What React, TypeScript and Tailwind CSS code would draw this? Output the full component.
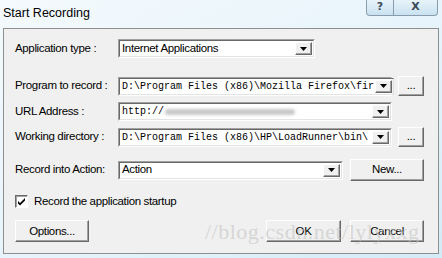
import React from 'react';

const sans = "font-['Liberation_Sans',sans-serif] text-[11.5px] tracking-[-0.35px] whitespace-nowrap";
const mono = "font-['Liberation_Mono','DejaVu_Sans_Mono',monospace]";

function DropArrow() {
  return (
    <div className="w-[17px] h-full flex items-center justify-center bg-[#f0f0f0] border border-t-white border-l-white border-b-[#696969] border-r-[#696969] shadow-[inset_-1px_-1px_0_#a0a0a0]">
      <svg width="7" height="4" viewBox="0 0 7 4">
        <path d="M0 0h7L3.5 4z" fill="#000" />
      </svg>
    </div>
  );
}

function Combo({ children, width, isMono }: { children: React.ReactNode; width: string; isMono?: boolean }) {
  return (
    <div className={`${width} h-[19px] flex items-stretch bg-white border border-t-[#a0a0a0] border-l-[#a0a0a0] border-b-white border-r-white`}>
      <div className="flex-1 flex items-stretch border border-t-[#696969] border-l-[#696969] border-b-[#e3e3e3] border-r-[#e3e3e3]">
        <div className={`flex-1 flex items-center pl-[2px] overflow-hidden whitespace-nowrap text-black ${isMono ? `${mono} text-[10px]` : sans}`}>
          {children}
        </div>
        <div className="p-[1px]">
          <DropArrow />
        </div>
      </div>
    </div>
  );
}

function Btn({ label, width, height = 'h-[22px]' }: { label: string; width: string; height?: string }) {
  return (
    <div className={`${width} ${height} flex items-center justify-center bg-[#f0f0f0] border border-t-white border-l-white border-b-[#696969] border-r-[#696969] shadow-[inset_-1px_-1px_0_#a0a0a0] ${sans} text-black`}>
      {label}
    </div>
  );
}

function Label({ text }: { text: string }) {
  return <div className={`w-[103px] shrink-0 ${sans} text-black`}>{text}</div>;
}

export default function App() {
  return (
    <div className="w-[442px] h-[258px] bg-gradient-to-br from-[#f4fafd] via-[#e8f4fb] to-[#d4ecf7] flex flex-col overflow-hidden relative">
      {/* Title bar */}
      <div className="h-[28px] shrink-0 flex items-start justify-between">
        <div className="pl-[3px] pt-[4px] font-['Liberation_Sans',sans-serif] text-[12.5px] text-black whitespace-nowrap">Start Recording</div>
        <div className="mr-[4px] flex h-[16px] border border-t-0 border-[#8a9cab] rounded-b-[4px] bg-gradient-to-b from-[#e8f3fa] to-[#c9e2f1] overflow-hidden">
          <div className="w-[27px] flex items-center justify-center border-r border-[#8a9cab] text-[11px] font-bold text-[#3b4a58] font-['DejaVu_Sans',sans-serif]">?</div>
          <div className="w-[43px] flex items-center justify-center text-[11px] font-bold text-[#3b4a58] font-['DejaVu_Sans',sans-serif]">X</div>
        </div>
      </div>

      {/* Client area */}
      <div className="mx-[3px] h-[226px] shrink-0 bg-[#f0f0f0] border border-[#8e8f8f] flex flex-col pl-[11px] pt-[10px] relative overflow-hidden">
        <div className="flex items-center">
          <Label text="Application type :" />
          <Combo width="w-[197px]">Internet Applications</Combo>
        </div>

        <div className="flex items-center mt-[18px] h-[20px]">
          <Label text="Program to record :" />
          <Combo width="w-[274px]" isMono>D:\Program Files (x86)\Mozilla Firefox\fir</Combo>
          <div className="ml-[6px]"><Btn label="..." width="w-[26px]" height="h-[20px]" /></div>
        </div>

        <div className="flex items-center mt-[6px]">
          <Label text="URL Address :" />
          <Combo width="w-[274px]" isMono>
            http://
            <span className="ml-[1px] inline-block w-[130px] h-[6px] bg-[#c8c8c8] rounded-full blur-[1.5px]" />
          </Combo>
        </div>

        <div className="flex items-center mt-[6px] h-[20px]">
          <Label text="Working directory :" />
          <Combo width="w-[274px]" isMono>D:\Program Files (x86)\HP\LoadRunner\bin\</Combo>
          <div className="ml-[6px]"><Btn label="..." width="w-[26px]" height="h-[20px]" /></div>
        </div>

        <div className="flex items-center mt-[12px] h-[22px]">
          <Label text="Record into Action:" />
          <Combo width="w-[225px]">Action</Combo>
          <div className="ml-[7px]"><Btn label="New..." width="w-[74px]" /></div>
        </div>

        <div className="flex items-center mt-[12px]">
          <div className="w-[13px] h-[13px] bg-white border border-t-[#696969] border-l-[#696969] border-b-white border-r-white flex items-center justify-center shadow-[inset_1px_1px_0_#a0a0a0]">
            <svg width="9" height="9" viewBox="0 0 9 9">
              <path d="M1 4l2 2 5-5v2.5l-5 5-2-2z" fill="#000" />
            </svg>
          </div>
          <div className={`ml-[6px] ${sans} text-black`}>Record the application startup</div>
        </div>

        <div className="flex items-center mt-[10px] pr-[14px] relative">
          <Btn label="Options..." width="w-[74px]" />
          <div className="flex-1" />
          <Btn label="OK" width="w-[75px]" />
          <div className="ml-[9px]"><Btn label="Cancel" width="w-[74px]" /></div>
          <div className="absolute left-[190px] top-[1px] font-['Liberation_Serif',serif] text-[22px] leading-none text-[#c4c4c4]/60 tracking-[0.5px] pointer-events-none whitespace-nowrap">
            //blog.csdn.net/lylyxxg
          </div>
        </div>
      </div>
    </div>
  );
}
